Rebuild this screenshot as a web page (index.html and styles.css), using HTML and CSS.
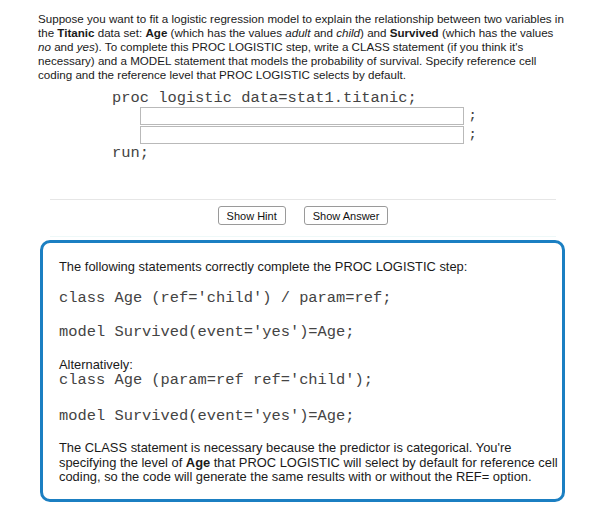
FILE: index.html
```html
<!DOCTYPE html>
<html>
<head>
<meta charset="utf-8">
<link rel="stylesheet" href="styles.css">
</head>
<body>
<div class="page">
  <p class="intro">Suppose you want to fit a logistic regression model to explain the relationship between two variables in<br>the <b>Titanic</b> data set: <b>Age</b> (which has the values <i>adult</i> and <i>child</i>) and <b>Survived</b> (which has the values<br><i>no</i> and <i>yes</i>). To complete this PROC LOGISTIC step, write a CLASS statement (if you think it's<br>necessary) and a MODEL statement that models the probability of survival. Specify reference cell<br>coding and the reference level that PROC LOGISTIC selects by default.</p>
  <div class="code-block">
    <div class="code-line">proc logistic data=stat1.titanic;</div>
    <div class="input-row"><input class="stmt" type="text"><span class="semi">;</span></div>
    <div class="input-row"><input class="stmt" type="text"><span class="semi">;</span></div>
    <div class="code-line">run;</div>
  </div>
  <div class="actions">
    <button class="btn">Show Hint</button>
    <button class="btn">Show Answer</button>
  </div>
  <div class="answer">
    <p class="txt">The following statements correctly complete the PROC LOGISTIC step:</p>
    <p class="code first">class Age (ref='child') / param=ref;</p>
    <p class="code second">model Survived(event='yes')=Age;</p>
    <p class="txt alt">Alternatively:<br><span class="code">class Age (param=ref ref='child');</span></p>
    <p class="code third">model Survived(event='yes')=Age;</p>
    <p class="txt final">The CLASS statement is necessary because the predictor is categorical. You're<br>specifying the level of <b>Age</b> that PROC LOGISTIC will select by default for reference cell<br>coding, so the code will generate the same results with or without the REF= option.</p>
  </div>
</div>
</body>
</html>
```

FILE: styles.css
```css
html, body {
  margin: 0;
  padding: 0;
  background: #fff;
}
.page {
  width: 606px;
  font-family: "Liberation Sans", Arial, sans-serif;
  color: #1a1a1a;
}
.intro {
  margin: 0;
  padding: 12px 0 0 38px;
  font-size: 11.6px;
  line-height: 14px;
  white-space: nowrap;
}
.code-block {
  margin: 8px 0 0 112px;
  font-family: "Liberation Mono", "Courier New", monospace;
  font-size: 15.4px;
  color: #444;
}
.code-line {
  line-height: 17px;
  height: 17px;
}
.input-row {
  display: flex;
  align-items: center;
  padding-left: 28px;
  height: 17px;
  margin-bottom: 2px;
}
.stmt {
  box-sizing: border-box;
  width: 324px;
  height: 18px;
  margin: 0;
  border: 1px solid #b9b9b9;
  background: #fff;
  padding: 0 3px;
}
.semi {
  font-size: 12px;
  font-weight: bold;
  margin-left: 5px;
  color: #444;
}
.actions {
  margin: 37px 50px 0 50px;
  border-top: 1px solid #e6e6e6;
  border-bottom: 1px solid #eef8f8;
  padding: 6px 0 11px;
  display: flex;
  justify-content: center;
  gap: 18px;
}
.btn {
  font-family: "Liberation Sans", Arial, sans-serif;
  font-size: 11px;
  height: 19px;
  padding: 0 8px;
  background: #fff;
  border: 1px solid #9a9a9a;
  border-radius: 3px;
  color: #111;
}
.answer {
  margin: 3px 0 0 40px;
  width: 525px;
  box-sizing: border-box;
  border: 3px solid #1b7fc2;
  border-radius: 10px;
  padding: 17px 0 14px 16px;
}
.answer p { margin: 0; }
.txt {
  font-size: 12.9px;
  line-height: 14px;
  white-space: nowrap;
}
.code {
  font-family: "Liberation Mono", "Courier New", monospace;
  font-size: 15.4px;
  line-height: 17px;
  color: #444;
}
.first { margin-top: 16px !important; }
.second { margin-top: 17px !important; }
.alt { margin-top: 17px !important; }
.alt .code { display: inline-block; }
.third { margin-top: 19px !important; }
.final { margin-top: 16px !important; line-height: 14.5px; }
```
